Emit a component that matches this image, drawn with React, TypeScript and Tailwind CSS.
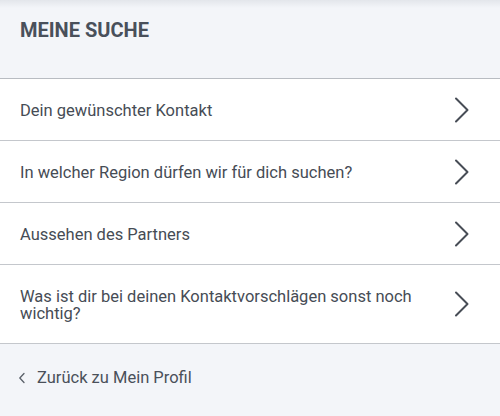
import React from "react";

const items = [
  "Dein gewünschter Kontakt",
  "In welcher Region dürfen wir für dich suchen?",
  "Aussehen des Partners",
  "Was ist dir bei deinen Kontaktvorschlägen sonst noch wichtig?",
];

function Chevron() {
  return (
    <svg width="16" height="26" viewBox="0 0 16 26" fill="none" className="shrink-0">
      <path
        d="M2 1.5 L13.5 13 L2 24.5"
        stroke="#474d56"
        strokeWidth="2"
        strokeLinecap="round"
        strokeLinejoin="round"
      />
    </svg>
  );
}

export default function App() {
  return (
    <div
      className="w-[500px] h-[416px] bg-[#f3f5f9] overflow-hidden"
      style={{ fontFamily: "Roboto, 'Noto Sans', sans-serif" }}
    >
      {/* Header */}
      <div className="relative h-[78px] px-5 pt-[17px]">
        <div className="absolute inset-x-0 top-0 h-[8px] bg-gradient-to-b from-[#e3e6eb] to-transparent" />
        <h1 className="text-[20px] font-bold text-[#49505b] leading-[26px]">MEINE SUCHE</h1>
      </div>

      {/* List */}
      <div className="bg-white border-t border-[#b8bcc2]">
        {items.map((item, i) => (
          <div
            key={item}
            className={
              "flex items-center justify-between pl-5 pr-[30px] border-b border-[#c4c7cc] " +
              (i === 3 ? "h-[79px]" : "h-[62px]")
            }
          >
            <span className="text-[16.5px] leading-[17px] text-[#464c55] pr-6 pt-[2px]">{item}</span>
            <Chevron />
          </div>
        ))}
      </div>

      {/* Back link */}
      <div className="flex items-center pl-[18px] pt-[24px] text-[#4a505a]">
        <svg width="8" height="12" viewBox="0 0 8 12" fill="none" className="mr-[11px]">
          <path d="M6 1.5 L1.8 6 L6 10.5" stroke="#5a6069" strokeWidth="1.3" strokeLinecap="round" strokeLinejoin="round" />
        </svg>
        <span className="text-[16.5px] leading-[20px]">Zurück zu Mein Profil</span>
      </div>
    </div>
  );
}
